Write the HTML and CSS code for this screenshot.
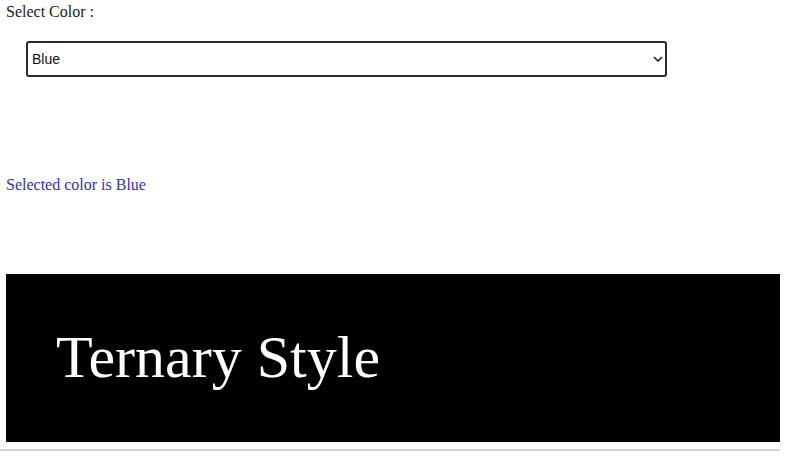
FILE: index.html
```html
<!DOCTYPE html>
<html>
<head>
<meta charset="utf-8">
<link rel="stylesheet" href="styles.css">
</head>
<body>
<div class="page">
  <label class="label" for="color">Select Color :</label>
  <div class="select-wrap">
    <select id="color" class="select">
      <option>Blue</option>
      <option>Red</option>
      <option>Green</option>
    </select>
    <svg class="chev" width="10" height="6" viewBox="0 0 10 6"><path d="M1 1 L5 5 L9 1" fill="none" stroke="#222" stroke-width="1.6"/></svg>
  </div>
  <p class="result">Selected color is Blue</p>
  <div class="banner"><h1 class="title">Ternary Style</h1></div>
</div>
<div class="rule"></div>
</body>
</html>
```
FILE: styles.css
```css
html, body { margin: 0; padding: 0; background: #fff; }
body { font-family: "Liberation Serif", "Times New Roman", serif; font-size: 16px; color: #222; }
.page { padding: 3px 12px 0 6px; }
.label { display: block; line-height: 18px; height: 18px; }
.select-wrap { position: relative; width: 641px; height: 36px; margin: 20px 0 0 20px; }
.select {
  appearance: none; -webkit-appearance: none;
  width: 641px; height: 36px; box-sizing: border-box;
  border: 2px solid #2b2b2b; border-radius: 3px; background: #fff;
  font-family: "Liberation Sans", Arial, sans-serif; font-size: 14px; color: #111;
  padding: 0 0 0 4px; margin: 0; outline: none;
}
.chev { position: absolute; left: 627px; top: 15px; pointer-events: none; }
.result { margin: 99px 0 0 0; line-height: 18px; color: #3030cc; }
.banner { margin-top: 80px; background: #000; height: 168px; box-sizing: border-box; padding: 49px 0 0 50px; }
.title { margin: 0; font-weight: normal; font-size: 60px; line-height: 68px; color: #fff; }
.rule { width: 780px; height: 2px; background: #d4d4d4; margin-top: 7px; }
```
